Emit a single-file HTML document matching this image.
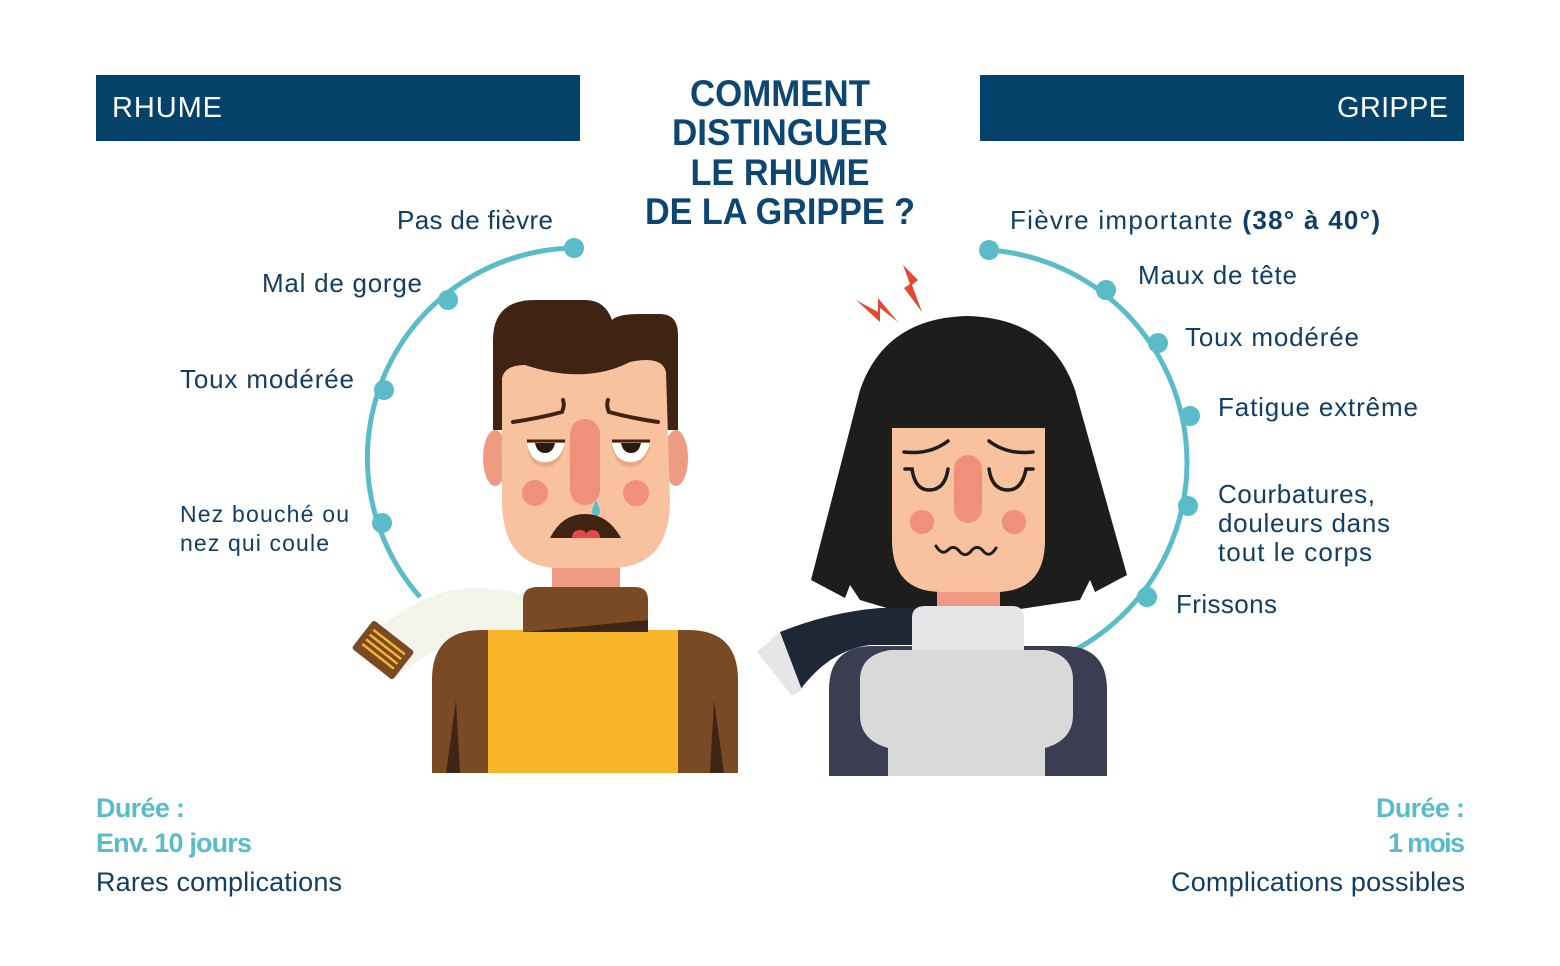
<!DOCTYPE html>
<html><head><meta charset="utf-8"><style>
html,body{margin:0;padding:0;background:#fff}
svg{display:block}
text{font-family:"Liberation Sans",sans-serif}
</style></head><body>
<svg width="1560" height="966" viewBox="0 0 1560 966" xmlns="http://www.w3.org/2000/svg">
<rect width="1560" height="966" fill="#fff"/>
<rect x="96" y="75" width="484" height="66" fill="#04426a"/>
<rect x="980" y="75" width="484" height="66" fill="#04426a"/>
<text x="112" y="117" font-size="29" fill="#fff" textLength="110">RHUME</text>
<text x="1448" y="117" font-size="29" fill="#fff" text-anchor="end" textLength="111">GRIPPE</text>
<g fill="#0d4670" font-weight="bold" font-size="37" text-anchor="middle">
<text x="780" y="106" textLength="180" lengthAdjust="spacingAndGlyphs">COMMENT</text>
<text x="780" y="145" textLength="216" lengthAdjust="spacingAndGlyphs">DISTINGUER</text>
<text x="780" y="185" textLength="179" lengthAdjust="spacingAndGlyphs">LE RHUME</text>
<text x="780" y="224" textLength="270" lengthAdjust="spacingAndGlyphs">DE LA GRIPPE ?</text>
</g>
<path d="M574 248 A210 210 0 0 0 420 597" fill="none" stroke="#5bbcc9" stroke-width="5"/>
<path d="M989 250 A213 213 0 0 1 1075 650" fill="none" stroke="#5bbcc9" stroke-width="5"/>
<g fill="#5bbcc9">
<circle cx="574" cy="248" r="10"/><circle cx="448" cy="300" r="10"/><circle cx="384" cy="390" r="10"/><circle cx="382" cy="523" r="10"/>
<circle cx="989" cy="250" r="10"/><circle cx="1106" cy="290" r="10"/><circle cx="1158" cy="343" r="10"/><circle cx="1190" cy="416" r="10"/><circle cx="1188" cy="506" r="10"/><circle cx="1147" cy="597" r="10"/>
</g>
<g fill="#123e63" font-size="26">
<text x="553" y="229" text-anchor="end" textLength="156">Pas de fièvre</text>
<text x="422" y="292" text-anchor="end" textLength="160">Mal de gorge</text>
<text x="354" y="388" text-anchor="end" textLength="174">Toux modérée</text>
<text x="180" y="522" font-size="23" textLength="169">Nez bouché ou</text>
<text x="180" y="551" font-size="23" textLength="149">nez qui coule</text>
<text x="1010" y="229" textLength="370">Fièvre importante <tspan font-weight="bold">(38° à 40°)</tspan></text>
<text x="1138" y="284" textLength="159">Maux de tête</text>
<text x="1185" y="346" textLength="174">Toux modérée</text>
<text x="1218" y="416" textLength="200">Fatigue extrême</text>
<text x="1218" y="503" textLength="157">Courbatures,</text>
<text x="1218" y="532" textLength="172">douleurs dans</text>
<text x="1218" y="561" textLength="154">tout le corps</text>
<text x="1176" y="613" textLength="101">Frissons</text>
</g>
<g font-size="27">
<text x="96" y="817" fill="#5bbcc9" font-weight="bold" textLength="89">Durée :</text>
<text x="96" y="852" fill="#5bbcc9" font-weight="bold" textLength="156">Env. 10 jours</text>
<text x="96" y="891" fill="#123e63" textLength="246">Rares complications</text>
<text x="1465" y="817" fill="#5bbcc9" font-weight="bold" text-anchor="end" textLength="89">Durée :</text>
<text x="1465" y="852" fill="#5bbcc9" font-weight="bold" text-anchor="end" textLength="77">1 mois</text>
<text x="1465" y="891" fill="#123e63" text-anchor="end" textLength="294">Complications possibles</text>
</g>

<path d="M365 640 Q420 590 470 588 Q510 588 528 598 L528 640 Q470 628 420 660 L390 680 Z" fill="#f4f5ea"/>
<g transform="rotate(38 383 650)">
<rect x="357" y="632" width="52" height="36" rx="3" fill="#7a4a24"/>
<g stroke="#f5b32a" stroke-width="2.5"><line x1="363" y1="640" x2="403" y2="640"/><line x1="363" y1="646" x2="403" y2="646"/><line x1="363" y1="652" x2="403" y2="652"/><line x1="363" y1="658" x2="403" y2="658"/></g>
</g>
<path d="M432 773 L432 680 Q432 630 482 630 L688 630 Q738 630 738 680 L738 773 Z" fill="#7a4a24"/>
<path d="M446 773 L456 700 L460 773 Z" fill="#3d2616"/>
<path d="M724 773 L714 700 L710 773 Z" fill="#3d2616"/>
<rect x="488" y="630" width="190" height="143" fill="#f7b62a"/>
<rect x="552" y="560" width="68" height="34" fill="#ef9a83"/>
<path d="M523 632 L523 600 Q523 587 537 587 L635 587 Q648 587 648 600 L648 632 Z" fill="#7a4a24"/>
<path d="M525 632 L648 620 L648 632 Z" fill="#3d2616"/>
<ellipse cx="495" cy="458" rx="12" ry="28" fill="#ef9a83"/>
<ellipse cx="676" cy="458" rx="12" ry="28" fill="#ef9a83"/>
<path d="M493 430 L493 340 Q493 300 535 300 L585 300 Q605 300 612 320 Q618 314 640 314 L660 314 Q678 314 678 335 L678 430 Z" fill="#3f2414"/>
<path d="M502 378 Q505 365 525 365 Q585 385 630 362 Q662 355 666 372 L670 500 Q670 568 610 568 L560 568 Q502 568 502 500 Z" fill="#f9c29e"/>
<path d="M513 422 Q540 418 562 412 Q565 405 563 400" fill="none" stroke="#3f2414" stroke-width="4" stroke-linecap="round"/>
<path d="M658 422 Q631 418 609 412 Q606 405 608 400" fill="none" stroke="#3f2414" stroke-width="4" stroke-linecap="round"/>
<path d="M527 446 L565 446 Q560 467 545 467 Q530 467 527 446 Z" fill="#e7ab85"/>
<path d="M612 446 L650 446 Q645 467 631 467 Q615 467 612 446 Z" fill="#e7ab85"/>
<path d="M527 443 L565 443 Q560 462 545 462 Q530 462 527 443 Z" fill="#fff"/>
<path d="M535 443 L555 443 Q553 453 545 453 Q537 453 535 443 Z" fill="#2a1b12"/>
<path d="M527 441 L565 441" stroke="#3f2414" stroke-width="3"/>
<path d="M612 443 L650 443 Q645 462 631 462 Q615 462 612 443 Z" fill="#fff"/>
<path d="M621 443 L641 443 Q639 453 631 453 Q623 453 621 443 Z" fill="#2a1b12"/>
<path d="M612 441 L650 441" stroke="#3f2414" stroke-width="3"/>
<rect x="570" y="419" width="30" height="86" rx="15" fill="#f0907a"/>
<path d="M596 500 Q600 508 600 512 A4 4 0 0 1 592 512 Q592 508 596 500 Z" fill="#5bbcc9"/>
<circle cx="535" cy="493" r="13" fill="#f0907a"/>
<circle cx="636" cy="493" r="13" fill="#f0907a"/>
<path d="M550 538 Q562 514 585 514 Q608 514 621 538 Z" fill="#3f2414"/>
<path d="M572 538 Q572 530 580 530 Q585 530 586 534 Q588 530 592 530 Q600 530 600 538 Z" fill="#e4474c"/>

<path d="M856 300 L878 312 L878 298 L898 322 L880 308 L880 322 Z" fill="#e5482e"/>
<path d="M903 265 L918 280 L912 285 L922 312 L904 288 L910 284 Z" fill="#e5482e"/>
<path d="M811 580 L860 390 Q885 318 967 316 Q1050 318 1075 390 L1127 575 L1095 592 L1090 580 L1080 600 L1000 612 L900 612 L860 600 L850 585 L845 598 Z" fill="#1d1d1b"/>
<path d="M780 632 Q830 612 880 608 L915 608 L915 645 L870 645 Q830 650 800 690 Z" fill="#1e2735"/>
<path d="M757 652 L780 632 L802 690 L792 696 Z" fill="#e6e6e8"/>
<path d="M829 776 L829 690 Q829 646 873 646 L1063 646 Q1107 646 1107 690 L1107 776 Z" fill="#3b3d52"/>
<path d="M888 776 L888 748 Q860 740 860 715 L860 680 Q860 655 890 650 L1045 650 Q1073 655 1073 680 L1073 715 Q1073 740 1045 748 L1045 776 Z" fill="#d9d9d9"/>
<rect x="937" y="585" width="63" height="30" fill="#ef9a83"/>
<path d="M912 650 L912 618 Q912 606 925 606 L1012 606 Q1024 606 1024 618 L1024 650 Z" fill="#e6e6e8"/>
<path d="M892 428 L1045 428 L1045 540 Q1045 592 995 592 L942 592 Q892 592 892 540 Z" fill="#f9c29e"/>
<path d="M892 428 L930 428 L932 382 L938 428 L972 428 L977 395 L981 428 L1015 428 L1020 395 L1024 428 L1045 428 L1045 410 L892 410 Z" fill="#1d1d1b"/>
<path d="M904 452 Q930 455 948 441" fill="none" stroke="#1d1d1b" stroke-width="3.5" stroke-linecap="round"/>
<path d="M1033 452 Q1007 455 989 441" fill="none" stroke="#1d1d1b" stroke-width="3.5" stroke-linecap="round"/>
<path d="M905 469 L912 469 Q915 490 929 490 Q945 490 948 469" fill="none" stroke="#1d1d1b" stroke-width="3.5" stroke-linecap="round"/>
<path d="M1033 469 L1026 469 Q1022 490 1008 490 Q992 490 989 469" fill="none" stroke="#1d1d1b" stroke-width="3.5" stroke-linecap="round"/>
<rect x="954" y="455" width="28" height="68" rx="14" fill="#f0907a"/>
<circle cx="922" cy="522" r="12" fill="#f0907a"/>
<circle cx="1014" cy="522" r="12" fill="#f0907a"/>
<path d="M936 546 Q942 556 948 550 Q954 544 960 552 Q966 558 972 550 Q978 544 984 552 Q990 558 996 548" fill="none" stroke="#1d1d1b" stroke-width="3" stroke-linecap="round"/>
</svg>
</body></html>
